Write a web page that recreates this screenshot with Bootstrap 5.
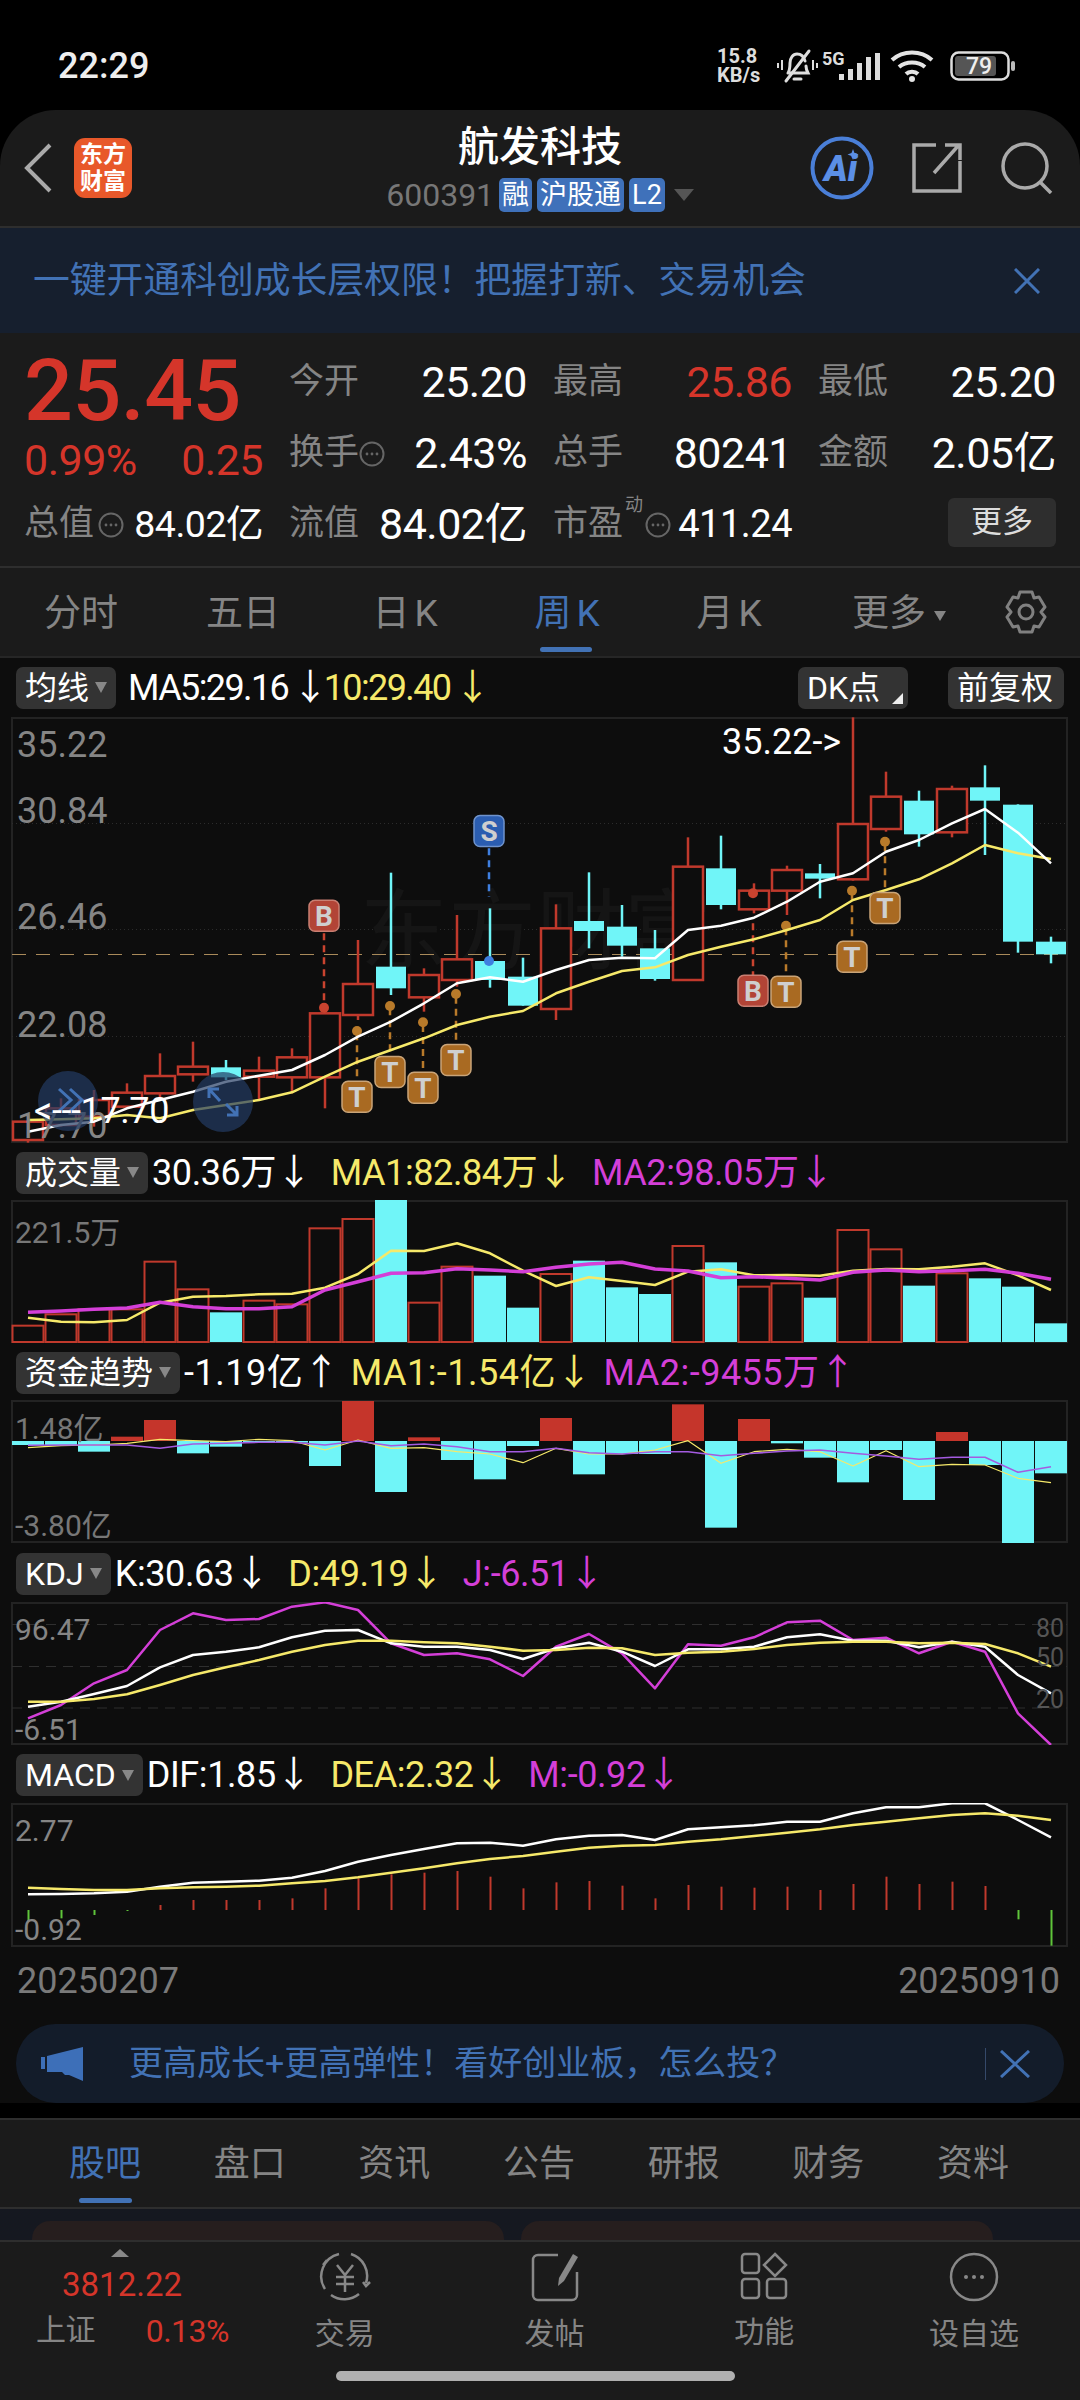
<!DOCTYPE html>
<html lang="zh-CN">
<head>
<meta charset="UTF-8">
<meta name="viewport" content="width=device-width, initial-scale=1">
<title>航发科技</title>
<link href="https://cdn.jsdelivr.net/npm/bootstrap@5.3.0/dist/css/bootstrap.min.css" rel="stylesheet">
<script src="https://cdn.jsdelivr.net/npm/bootstrap@5.3.0/dist/js/bootstrap.bundle.min.js" defer></script>
<style>
:root { --panel: #1b1b1b; --chart: #0d0d0d; --blue: #4272b5; --red: #d5352a; --grey: #858585; --cyan: #70f5f8; --yellow: #f6e96a; --pink: #d43fd8; }
html, body { background: #000; }
body { width: 1080px; height: 2400px; overflow: hidden; margin: 0; font-family: Roboto, "Noto Sans CJK SC", sans-serif; color: #fff; }
svg { display: block; }
svg text { font-family: Roboto, "Noto Sans CJK SC", sans-serif; }

.status-bar { height: 110px; padding: 22px 64px 0 58px; }
.clock { font-size: 36px; font-weight: 500; color: #eee; }
.speed { width: 50px; font-size: 20px; line-height: 19px; font-weight: 700; color: #ddd; margin-right: 9px; }

.app-head { height: 118px; background: var(--panel); border-radius: 56px 56px 0 0; border-bottom: 2px solid #2e2e2e; display: grid; grid-template-columns: 270px 1fr 270px; }
.brand-logo { width: 58px; height: 60px; margin-left: 22px; background: #e8582a; border-radius: 11px; font-size: 23px; line-height: 27px; font-weight: 700; text-align: center; padding-top: 3px; }
.stock-name { font-size: 41px; line-height: 48px; margin-top: 13px; font-weight: 500; }
.stock-sub { margin-top: 7px; gap: 5px; color: #777; font-size: 32px; line-height: 34px; }
.tag-blue { background: #3f71ba; color: #fff; border-radius: 5px; font-size: 27px; line-height: 34px; padding: 0 3px; }

.promo { height: 105px; background: #161f2e; padding: 0 40px 0 33px; color: var(--blue); font-size: 36.8px; }

.quote { height: 235px; background: var(--panel); border-bottom: 2px solid #2e2e2e; padding: 14px 25px 0 24px; display: grid; grid-template-columns: 239px 238px 239px 238px; grid-auto-rows: 71px; column-gap: 26px; }
.price-cell { grid-row: span 2; }
.last-price { font-size: 86px; line-height: 84px; font-weight: 500; color: var(--red); letter-spacing: -.5px; margin-top: 2px; }
.change-row { font-size: 43px; line-height: 50px; color: var(--red); margin-top: 2px; letter-spacing: -.5px; }
.stat-cell { font-size: 43px; letter-spacing: -.5px; white-space: nowrap; }
.stat-label { font-size: 35px; color: var(--grey); letter-spacing: 0; white-space: nowrap; flex: none; }
.stat-small { font-size: 37.5px; }
.stat-pe { font-size: 38px; }
.txt-red { color: var(--red); }
.more-btn { width: 108px; height: 49px; background: #2e2e2e; border-radius: 6px; font-size: 31px; color: #ddd; margin-top: -4px; letter-spacing: 0; }

.kline-tabs { height: 90px; background: var(--panel); color: var(--grey); font-size: 37px; border-bottom: 2px solid #262626; }
.kline-tab { width: 162px; height: 90px; text-align: center; line-height: 92px; position: relative; }
.kline-tab .latin { margin-left: 5px; }
.tab-on { color: var(--blue); }
.tab-on::after { content: ""; position: absolute; left: 54px; bottom: 6px; width: 52px; height: 5px; border-radius: 3px; background: var(--blue); }
.caret-mini { display: inline-block; border: 6px solid transparent; border-top: 10px solid var(--grey); border-bottom: 0; margin-left: 8px; vertical-align: middle; }

.chart-area { background: var(--chart); }
.ind-row { height: 57px; padding: 2px 0 0 16px; font-size: 36px; letter-spacing: -.4px; gap: 19px; white-space: nowrap; }
.ind-btn { height: 42px; background: #333; border-radius: 7px; padding: 0 9px; font-size: 32px; color: #fff; margin-right: -15px; letter-spacing: 0; }
.ind-btn i { border: 6px solid transparent; border-top: 11px solid #888; border-bottom: 0; margin-left: 6px; }
.ind-yellow { color: var(--yellow); }
.ind-pink { color: var(--pink); }
.ind-tight { letter-spacing: -1.6px; }
.ind-wide { letter-spacing: .5px; gap: 11px; }
.ind-btn-plain { margin-right: 0; height: 42px; background: #333; border-radius: 7px; font-size: 32px; padding: 0 9px; position: relative; letter-spacing: 0; }
.corner-mark { position: absolute; right: 5px; bottom: 5px; border-left: 11px solid transparent; border-bottom: 11px solid #eee; }
.date-row { height: 77px; padding: 0 20px 10px 17px; color: #7a7a7a; font-size: 36px; }

.ad-pill { height: 79px; margin: 0 16px 15px; border-radius: 40px; background: #131c2a; padding: 0 34px 0 25px; color: var(--blue); font-size: 34px; gap: 46px; }
.ad-close { border-left: 1px solid #35496a; height: 32px; padding-left: 14px; }

.sub-tabs { height: 91px; background: var(--panel); border-top: 2px solid #2e2e2e; border-bottom: 2px solid #2e2e2e; padding: 0 69px; color: var(--grey); font-size: 36px; }
.sub-tab { position: relative; line-height: 88px; width: 74px; white-space: nowrap; }
.sub-tab.tab-on::after { left: 10px; bottom: 4px; width: 53px; }
.post-peek { height: 31px; background: #151820; padding: 12px 0 0 32px; gap: 17px; }
.peek-card { width: 472px; height: 19px; background: #261e1e; border-radius: 18px 18px 0 0; }

.bottom-nav { height: 161px; background: var(--panel); border-top: 2px solid #2e2e2e; position: relative; }
.index-box { width: 240px; padding: 7px 11px 0 36px; }
.index-up { width: 0; margin: 0 auto 0 75px; border: 9px solid transparent; border-bottom: 8px solid #888; border-top: 0; }
.index-value { font-size: 33px; line-height: 38px; color: var(--red); text-align: center; margin-top: 9px; padding-right: 21px; }
.index-row { font-size: 32px; margin-top: 3px; color: var(--grey); letter-spacing: -.5px; }
.index-row span:first-child { font-size: 30px; }
.nav-item { width: 209.7px; padding-top: 10px; color: var(--grey); font-size: 30px; text-align: center; }
.nav-item svg { margin: 0 auto 9px; }
.home-bar { position: absolute; left: 336px; top: 129px; width: 399px; height: 10px; border-radius: 5px; background: #b0b0b0; }
</style>
</head>
<body>

<svg width="0" height="0" style="position:absolute">
  <symbol id="more-ring" viewBox="0 0 26 26">
    <circle cx="13" cy="13" r="11.5" fill="none" stroke="#666" stroke-width="2"/>
    <circle cx="8" cy="13" r="1.4" fill="#666"/><circle cx="13" cy="13" r="1.4" fill="#666"/><circle cx="18" cy="13" r="1.4" fill="#666"/>
  </symbol>
</svg>

<!-- status bar -->
<div class="status-bar d-flex justify-content-between align-items-center">
  <span class="clock">22:29</span>
  <div class="d-flex align-items-center">
    <div class="speed">15.8<br>KB/s</div>
    <svg width="42" height="36" viewBox="0 0 42 36" fill="none" stroke="#ddd" stroke-width="3" class="me-1">
      <path d="M12 25c2-3 2-6 2-10 0-5 3-9 7-9s7 3 8 7M30 18c0 3 1 5 2 7H12M18 31h7" stroke-linecap="round"/>
      <path d="M10 33 33 3" stroke-linecap="round"/>
      <path d="M6 12v10M2 15v5M37 12v10M41 15v5" stroke-width="2"/>
    </svg>
    <svg width="60" height="32" viewBox="0 0 60 32" class="me-2">
      <text x="0" y="15" font-size="18" font-weight="700" fill="#ddd">5G</text>
      <g fill="#ddd"><rect x="17" y="24" width="5" height="6"/><rect x="26" y="19" width="5" height="11"/><rect x="35" y="13" width="5" height="17"/><rect x="44" y="7" width="5" height="23"/><rect x="53" y="3" width="5" height="27"/></g>
    </svg>
    <svg width="44" height="34" viewBox="0 0 44 34" fill="none" stroke="#e4e4e4" stroke-width="4" class="me-3">
      <path d="M2 11c11-10 29-10 40 0M9 18c7-6 19-6 26 0M16 25c3-3 9-3 12 0"/>
      <circle cx="22" cy="30" r="3" fill="#e4e4e4" stroke="none"/>
    </svg>
    <svg width="66" height="30" viewBox="0 0 66 30">
      <rect x="1.5" y="1.5" width="57" height="27" rx="7" fill="none" stroke="#ddd" stroke-width="2.5"/>
      <rect x="5" y="5" width="41" height="20" rx="3" fill="#555"/>
      <rect x="61" y="10" width="4" height="10" rx="2" fill="#bbb"/>
      <text x="29" y="23" text-anchor="middle" font-size="23" font-weight="500" fill="#eee">79</text>
    </svg>
  </div>
</div>

<!-- stock header -->
<div class="app-head">
  <div class="d-flex align-items-center">
    <svg class="ms-4" width="28" height="50" viewBox="0 0 28 50" fill="none" stroke="#aaa" stroke-width="4"><path d="M26 2 3 25l23 23"/></svg>
    <div class="brand-logo">东方<br>财富</div>
  </div>
  <div class="d-flex flex-column align-items-center">
    <div class="stock-name">航发科技</div>
    <div class="stock-sub d-flex align-items-center">600391<span class="tag-blue">融</span><span class="tag-blue">沪股通</span><span class="tag-blue">L2</span>
      <svg width="20" height="12" viewBox="0 0 20 12" class="ms-1"><path d="M0 0h20L10 12z" fill="#555"/></svg>
    </div>
  </div>
  <div class="d-flex align-items-center" style="gap:38px">
    <svg width="64" height="64" viewBox="0 0 64 64">
      <circle cx="32" cy="32" r="29.5" fill="none" stroke="#4a7fd8" stroke-width="4"/>
      <text x="14" y="45" font-size="36" font-weight="900" font-style="italic" fill="#5b8fe6">Ai</text>
      <path d="M43 13l1.500 4 4 1.500-4 1.500-1.500 4-1.500-4-4-1.500 4-1.500z" fill="#5b8fe6"/>
    </svg>
    <svg width="50" height="50" viewBox="0 0 50 50" fill="none" stroke="#aaa" stroke-width="3.500"><path d="M24 2H2v46h46V18"/><path d="M22 30 46 3M33 2h15v15"/></svg>
    <svg width="54" height="52" viewBox="0 0 54 52" fill="none" stroke="#aaa" stroke-width="3.500"><circle cx="25" cy="24" r="22"/><path d="M40 40l11 11"/></svg>
  </div>
</div>

<div class="promo d-flex justify-content-between align-items-center">
  <span>一键开通科创成长层权限！把握打新、交易机会</span>
  <svg width="26" height="26" viewBox="0 0 26 26" fill="none" stroke="#4272b5" stroke-width="3"><path d="M1 1l24 24M25 1 1 25"/></svg>
</div>

<!-- quote block -->
<div class="quote">
  <div class="price-cell">
    <div class="last-price">25.45</div>
    <div class="change-row d-flex justify-content-between"><span>0.99%</span><span>0.25</span></div>
  </div>
  <div class="stat-cell d-flex justify-content-between align-items-center"><span class="stat-label">今开</span><span>25.20</span></div>
  <div class="stat-cell d-flex justify-content-between align-items-center"><span class="stat-label">最高</span><span class="txt-red">25.86</span></div>
  <div class="stat-cell d-flex justify-content-between align-items-center"><span class="stat-label">最低</span><span>25.20</span></div>
  <div class="stat-cell d-flex justify-content-between align-items-center"><span class="stat-label d-flex align-items-center">换手<svg width="26" height="26"><use href="#more-ring"/></svg></span><span>2.43%</span></div>
  <div class="stat-cell d-flex justify-content-between align-items-center"><span class="stat-label">总手</span><span>80241</span></div>
  <div class="stat-cell d-flex justify-content-between align-items-center"><span class="stat-label">金额</span><span>2.05亿</span></div>
  <div class="stat-cell d-flex justify-content-between align-items-center"><span class="stat-label d-flex align-items-center">总值<svg width="26" height="26" class="ms-1"><use href="#more-ring"/></svg></span><span class="stat-small">84.02亿</span></div>
  <div class="stat-cell d-flex justify-content-between align-items-center"><span class="stat-label">流值</span><span>84.02亿</span></div>
  <div class="stat-cell d-flex justify-content-between align-items-center"><span class="stat-label d-flex align-items-center">市盈<sup style="font-size:18px;margin:-22px 2px 0 2px">动</sup><svg width="26" height="26"><use href="#more-ring"/></svg></span><span class="stat-pe">411.24</span></div>
  <div class="stat-cell d-flex justify-content-end align-items-center"><div class="more-btn d-flex justify-content-center align-items-center">更多</div></div>
</div>

<div class="kline-tabs d-flex">
  <div class="kline-tab">分时</div>
  <div class="kline-tab">五日</div>
  <div class="kline-tab">日<span class="latin">K</span></div>
  <div class="kline-tab tab-on">周<span class="latin">K</span></div>
  <div class="kline-tab">月<span class="latin">K</span></div>
  <div class="kline-tab ps-3">更多<span class="caret-mini"></span></div>
  <div class="d-flex align-items-center justify-content-center flex-grow-1">
    <svg width="46" height="46" viewBox="0 0 46 46" fill="none" stroke="#808080" stroke-width="3"><path d="M17 3h12l2 6 5-1 6 10-4 5 4 5-6 10-5-1-2 6H17l-2-6-5 1-6-10 4-5-4-5 6-10 5 1z" stroke-linejoin="round"/><circle cx="23" cy="23" r="7"/></svg>
  </div>
</div>

<div class="chart-area">
  <div class="ind-row d-flex align-items-center" style="height:59px;padding-top:0">
    <div class="ind-btn d-flex align-items-center">均线<i></i></div>
    <span class="ind-tight ms-2">MA5:29.16<span class="ms-1">↓</span></span>
    <span class="ind-yellow ind-tight" style="margin-left:-22px">10:29.40<span class="ms-1">↓</span></span>
    <div class="d-flex ms-auto gap-5 pe-3">
      <div class="ind-btn-plain d-flex align-items-center" style="gap:0;width:110px">DK点<span class="corner-mark"></span></div>
      <div class="ind-btn-plain d-flex align-items-center" style="width:116px;margin-left:-8px">前复权</div>
    </div>
  </div>
  <svg id="kline" width="1080" height="426" viewBox="0 717 1080 426"></svg>

  <div class="ind-row d-flex align-items-center">
    <div class="ind-btn d-flex align-items-center">成交量<i></i></div>
    <span>30.36万<span>↓</span></span>
    <span class="ind-yellow">MA1:82.84万<span>↓</span></span>
    <span class="ind-pink">MA2:98.05万<span>↓</span></span>
  </div>
  <svg id="volume" width="1080" height="143" viewBox="0 1200 1080 143"></svg>

  <div class="ind-row ind-wide d-flex align-items-center">
    <div class="ind-btn d-flex align-items-center" style="margin-right:-7px">资金趋势<i></i></div>
    <span>-1.19亿<span>↑</span></span>
    <span class="ind-yellow">MA1:-1.54亿<span>↓</span></span>
    <span class="ind-pink">MA2:-9455万<span>↑</span></span>
  </div>
  <svg id="fund" width="1080" height="143" viewBox="0 1400 1080 143"></svg>

  <div class="ind-row d-flex align-items-center" style="height:59px">
    <div class="ind-btn d-flex align-items-center">KDJ<i></i></div>
    <span>K:30.63<span>↓</span></span>
    <span class="ind-yellow">D:49.19<span>↓</span></span>
    <span class="ind-pink">J:-6.51<span>↓</span></span>
  </div>
  <svg id="kdj" width="1080" height="143" viewBox="0 1602 1080 143"></svg>

  <div class="ind-row d-flex align-items-center" style="height:58px">
    <div class="ind-btn d-flex align-items-center">MACD<i></i></div>
    <span>DIF:1.85<span>↓</span></span>
    <span class="ind-yellow">DEA:2.32<span>↓</span></span>
    <span class="ind-pink">M:-0.92<span>↓</span></span>
  </div>
  <svg id="macd" width="1080" height="144" viewBox="0 1803 1080 144"></svg>

  <div class="date-row d-flex justify-content-between align-items-center"><span>20250207</span><span>20250910</span></div>

  <div class="ad-pill d-flex align-items-center">
    <svg width="42" height="34" viewBox="0 0 42 34" fill="#3d6fb8" style="flex:none"><path d="M0 10h4v12H0zM6 9l36-9v34L28 28H24l-3-3H6z"/></svg>
    <span class="flex-grow-1">更高成长+更高弹性！看好创业板，怎么投？</span>
    <div class="ad-close d-flex align-items-center"><svg width="30" height="28" viewBox="0 0 30 28" fill="none" stroke="#4272b5" stroke-width="3"><path d="M1 1l28 26M29 1 1 27"/></svg></div>
  </div>
</div>

<div class="sub-tabs d-flex justify-content-between">
  <div class="sub-tab tab-on">股吧</div>
  <div class="sub-tab">盘口</div>
  <div class="sub-tab">资讯</div>
  <div class="sub-tab">公告</div>
  <div class="sub-tab">研报</div>
  <div class="sub-tab">财务</div>
  <div class="sub-tab">资料</div>
</div>
<div class="post-peek d-flex"><div class="peek-card"></div><div class="peek-card"></div></div>

<div class="bottom-nav d-flex">
  <div class="index-box">
    <div class="index-up"></div>
    <div class="index-value">3812.22</div>
    <div class="index-row d-flex justify-content-between"><span>上证</span><span class="txt-red">0.13%</span></div>
  </div>
  <div class="nav-item">
    <svg width="60" height="50" viewBox="0 0 60 50" fill="none" stroke="#888" stroke-width="2.500">
      <path d="M24 2A23 23 0 0 0 10 37M36 2a23 23 0 0 1 15 29M12 8l-4 5M48 30l3 4 4-4M16 43a23 23 0 0 0 28-1"/>
      <path d="M22 13l8 10 8-10M21 25h18M21 32h18M30 23v17"/>
    </svg>
    交易
  </div>
  <div class="nav-item">
    <svg width="50" height="50" viewBox="0 0 50 50" fill="none" stroke="#888" stroke-width="2.500">
      <path d="M28 3H8a5 5 0 0 0-5 5v35a5 5 0 0 0 5 5h34a5 5 0 0 0 5-5V20"/>
      <path d="M43 2l5 3-14 24-6 5 1-8z" fill="#888" stroke="none"/>
    </svg>
    发帖
  </div>
  <div class="nav-item">
    <svg width="48" height="48" viewBox="0 0 48 48" fill="none" stroke="#888" stroke-width="2.500">
      <rect x="2" y="2" width="17" height="19" rx="3"/><path d="M35 2l11 11-11 11-11-11z"/>
      <rect x="2" y="27" width="17" height="19" rx="3"/><rect x="27" y="27" width="19" height="19" rx="3"/>
    </svg>
    功能
  </div>
  <div class="nav-item">
    <svg width="50" height="50" viewBox="0 0 50 50" fill="none" stroke="#888" stroke-width="2.500">
      <circle cx="25" cy="25" r="23"/>
      <g fill="#888" stroke="none"><circle cx="17" cy="25" r="2"/><circle cx="25" cy="25" r="2"/><circle cx="33" cy="25" r="2"/></g>
    </svg>
    设自选
  </div>
  <div class="home-bar"></div>
</div>

<script>
// chart series are kept in thirds of a pixel, counted from each panel's base line
const RED = "#c0392c", CYAN = "#70f5f8", YEL = "#f6e96a", PINK = "#d43fd8", WHT = "#ffffff";
const cx = i => 28 + 33 * i;

function line(list, base, color, w) {
  const pts = list.map((z, i) => cx(i) + "," + (base + z / 3).toFixed(1)).join(" ");
  return `<polyline points="${pts}" fill="none" stroke="${color}" stroke-width="${w}" stroke-linejoin="round"/>`;
}
function label(x, y, txt, size, fill, extra) {
  return `<text x="${x}" y="${y}" font-size="${size}" fill="${fill}" ${extra || ""}>${txt}</text>`;
}
function hline(y, color, dash) {
  return `<line x1="12" x2="1067" y1="${y}" y2="${y}" stroke="${color}" stroke-width="1.2" stroke-dasharray="${dash}"/>`;
}
function frame(top, h) {
  return `<rect x="12" y="${top}" width="1055" height="${h}" fill="none" stroke="#232323" stroke-width="2"/>`;
}

/* ---------- candles ---------- */
const candles = [
  [1385,1385,1440,1448,1],[1315,1345,1395,1400,1],[1290,1320,1370,1400,1],[1270,1298,1340,1340,1],
  [1180,1248,1300,1320,1],[1145,1220,1243,1265,1],[1200,1222,1252,1260,0],[1190,1232,1250,1320,1],
  [1165,1192,1252,1300,1],[1030,1060,1252,1345,1],[840,972,1065,1080,1],[638,920,985,1005,0],
  [925,945,1012,1055,1],[765,898,960,980,1],[745,903,960,983,0],[893,950,1037,1037,0],
  [733,805,1047,1080,1],[637,783,813,865,0],[735,800,857,890,0],[810,865,957,962,0],
  [532,620,960,960,1],[527,625,735,748,0],[670,692,748,760,1],[617,630,692,765,1],
  [612,640,656,715,0],[172,492,658,662,1],[335,410,507,515,1],[392,422,523,560,0],
  [377,387,517,532,1],[316,382,422,585,0],[433,434,845,878,0],[830,845,883,910,0]
];
const ma5 = [1415,1395,1385,1345,1320,1295,1265,1247,1230,1185,1130,1085,1030,970,952,965,930,900,893,895,810,797,773,725,665,640,575,540,490,447,518,610];
const ma10 = [1380,1378,1375,1365,1375,1350,1335,1320,1297,1250,1205,1170,1135,1095,1070,1053,1000,965,933,922,885,860,838,810,780,720,690,658,610,555,580,597];
const KB = 660;
let k = frame(718, 424);
k += hline(823.5, "#2c2c2c", "1 3") + hline(929.5, "#2c2c2c", "1 3") + hline(1036.5, "#2c2c2c", "1 3");
k += label(360, 962, "东方财富", 88, "#151515");
k += hline(954.5, "#a98a5a", "14 10");

candles.forEach((c, i) => {
  const x = cx(i), up = c[4], col = up ? RED : CYAN;
  const [hi, top, bot, lo] = c.map(z => KB + z / 3);
  k += `<line x1="${x}" x2="${x}" y1="${hi}" y2="${lo}" stroke="${col}" stroke-width="2.500"/>`;
  k += up
    ? `<rect x="${x - 15}" y="${top}" width="30" height="${bot - top}" fill="#0d0d0d" stroke="${col}" stroke-width="2.500"/>`
    : `<rect x="${x - 15}" y="${top}" width="30" height="${bot - top}" fill="${col}"/>`;
});

// trade points: [x, badge z, dot z, letter, dash from, dash to]
const marks = [
  [324,767,1043,"B",820,1030],[357,1310,1113,"T",1120,1265],[390,1236,1038,"T",1045,1190],
  [423,1283,1087,"T",1095,1238],[456,1200,1002,"T",1010,1155],[489,513,903,"S",565,710],
  [753,992,700,"B",790,945],[786,995,797,"T",805,950],[852,890,692,"T",700,845],[885,744,545,"T",553,698]
];
const markCol = { B: ["#b24436", "#c97f72", "#c9432f"], T: ["#a96a22", "#c9a478", "#b87a2a"], S: ["#2b5db0", "#6f93cc", "#3f7fe0"] };
marks.forEach(m => {
  const [x, bz, dz, t, d1, d2] = m, col = markCol[t];
  k += `<line x1="${x}" x2="${x}" y1="${KB + d1 / 3}" y2="${KB + d2 / 3}" stroke="${col[2]}" stroke-width="2.500" stroke-dasharray="7 5"/>`;
  k += `<circle cx="${x}" cy="${KB + dz / 3}" r="5" fill="${col[2]}"/>`;
});
k += line(ma10, KB, YEL, 2.5) + line(ma5, KB, WHT, 2.5);
marks.forEach(m => {
  const [x, bz, , t] = m, col = markCol[t], by = KB + bz / 3;
  k += `<rect x="${x - 15}" y="${by - 15.5}" width="30" height="31" rx="6" fill="${col[0]}" stroke="${col[1]}" stroke-width="1.500"/>`;
  k += label(x, by + 10, t, 28, "#cfcfcf", 'text-anchor="middle" font-weight="700"');
});
[["35.22", 757], ["30.84", 823], ["26.46", 929], ["22.08", 1037], ["17.70", 1138]].forEach(a => {
  k += label(17, a[1], a[0], 36, "#858585");
});
k += `<circle cx="68" cy="1101" r="30" fill="#233c64" opacity=".7"/><circle cx="223" cy="1102" r="30" fill="#233c64" opacity=".7"/>`;
k += `<path d="M59 1089l12 11-12 11M70 1089l12 11-12 11" fill="none" stroke="#4272b5" stroke-width="3"/>`;
k += `<path d="M220 1101l-11-12M209 1098v-9h10M226 1104l11 11M237 1106v9h-10" fill="none" stroke="#4272b5" stroke-width="3"/>`;
k += label(34, 1123, "&lt;---17.70", 36, "#fff", 'letter-spacing="-.4"');
k += label(722, 754, "35.22-&gt;", 36, "#fff");
document.getElementById("kline").innerHTML = k;

/* ---------- volume ---------- */
const volTop = [527,493,478,478,335,418,487,452,463,235,207,150,458,350,377,473,372,332,412,432,288,337,410,400,443,240,298,407,370,385,410,520];
const volMa1 = [503,515,517,510,458,440,438,433,431,413,372,302,303,280,310,362,408,382,393,405,365,358,376,375,377,362,357,358,350,340,376,420];
const volMa2 = [487,483,478,474,457,470,476,476,470,420,395,370,368,356,360,365,352,342,337,357,363,383,380,385,390,367,360,365,362,358,370,388];
let v = frame(1201, 141);
volTop.forEach((z, i) => {
  const x = cx(i), y = 1150 + z / 3, b = 1342;
  v += candles[i][4]
    ? `<rect x="${x - 15.5}" y="${y}" width="31" height="${b - y}" fill="none" stroke="${RED}" stroke-width="2"/>`
    : `<rect x="${x - 16}" y="${y}" width="32" height="${b - y}" fill="${CYAN}"/>`;
});
v += line(volMa1, 1150, YEL, 2.5) + line(volMa2, 1150, PINK, 3.5);
v += label(15, 1243, "221.5万", 30, "#777");
document.getElementById("volume").innerHTML = v;

/* ---------- capital trend ---------- */
const fundEnd = [885,885,905,860,810,910,890,876,878,948,753,1026,862,930,988,888,804,973,912,912,763,1133,807,880,923,997,900,1050,846,945,1182,970];
const fundMa1 = [893,887,885,880,868,872,875,868,872,900,870,895,893,905,912,938,895,912,912,900,872,940,905,898,905,948,902,950,943,945,985,998];
const fundMa2 = [886,885,885,885,895,882,880,877,877,885,873,887,882,890,905,905,895,908,912,905,905,917,910,903,900,910,918,928,922,922,967,950];
let f = frame(1401, 141);
fundEnd.forEach((z, i) => {
  const x = cx(i) - 16, a = 1150 + 873 / 3, b = 1150 + z / 3, neg = z > 873;
  f += `<rect x="${x}" y="${Math.min(a, b)}" width="32" height="${Math.abs(b - a)}" fill="${neg ? CYAN : "#c5352b"}"/>`;
});
f += line(fundMa1, 1150, YEL, 1.2) + line(fundMa2, 1150, "#a45be0", 1.6);
f += label(15, 1439, "1.48亿", 30, "#777") + label(15, 1536, "-3.80亿", 30, "#777");
document.getElementById("fund").innerHTML = f;

/* ---------- KDJ ---------- */
const kK = [470,455,432,408,352,315,305,292,262,242,240,280,290,290,300,327,295,278,305,348,298,298,290,262,253,272,272,292,275,290,375,430];
const kD = [455,455,447,433,405,375,352,330,305,285,272,272,277,280,290,302,300,293,295,315,308,305,297,285,278,275,275,280,278,282,310,350];
const kJ = [505,465,400,360,240,190,210,207,170,157,180,280,315,310,328,378,290,252,310,415,283,287,262,217,212,270,263,310,275,305,490,585];
let d = frame(1603, 141);
d += hline(1624.5, "#2f2f2f", "10 7") + hline(1666.5, "#2f2f2f", "10 7") + hline(1708, "#2f2f2f", "10 7");
d += line(kJ, 1550, PINK, 2.5) + line(kK, 1550, WHT, 2.5) + line(kD, 1550, YEL, 2.5);
d += label(15, 1640, "96.47", 30, "#858585") + label(15, 1740, "-6.51", 30, "#858585");
d += label(1036, 1637, "80", 25, "#555") + label(1036, 1666, "50", 25, "#555") + label(1036, 1708, "20", 25, "#555");
document.getElementById("kdj").innerHTML = d;

/* ---------- MACD ---------- */
const dif = [1033,1032,1030,1025,1010,998,995,992,983,963,935,915,897,880,878,887,868,857,855,870,838,832,826,815,815,790,772,772,760,760,810,862];
const dea = [1013,1017,1020,1020,1015,1012,1010,1007,1000,993,982,968,955,940,927,918,905,893,887,885,875,868,858,848,838,825,815,805,795,790,797,810];
const hist = [1115,1105,1095,1083,1065,1050,1050,1050,1045,1015,985,973,968,963,980,1015,997,993,1007,1045,1005,1010,1013,1010,1020,1002,980,1002,995,1008,1108,1187];
let m = frame(1804, 142);
hist.forEach((z, i) => {
  const x = cx(i) + .5, col = z > 1080 ? "#5fc53a" : RED;
  m += `<line x1="${x}" x2="${x}" y1="${1550 + 1080 / 3}" y2="${1550 + z / 3}" stroke="${col}" stroke-width="2"/>`;
});
m += line(dif, 1550, WHT, 2.5) + line(dea, 1550, YEL, 2.5);
m += label(15, 1841, "2.77", 30, "#858585") + label(15, 1940, "-0.92", 30, "#858585");
document.getElementById("macd").innerHTML = m;
</script>
</body>
</html>
